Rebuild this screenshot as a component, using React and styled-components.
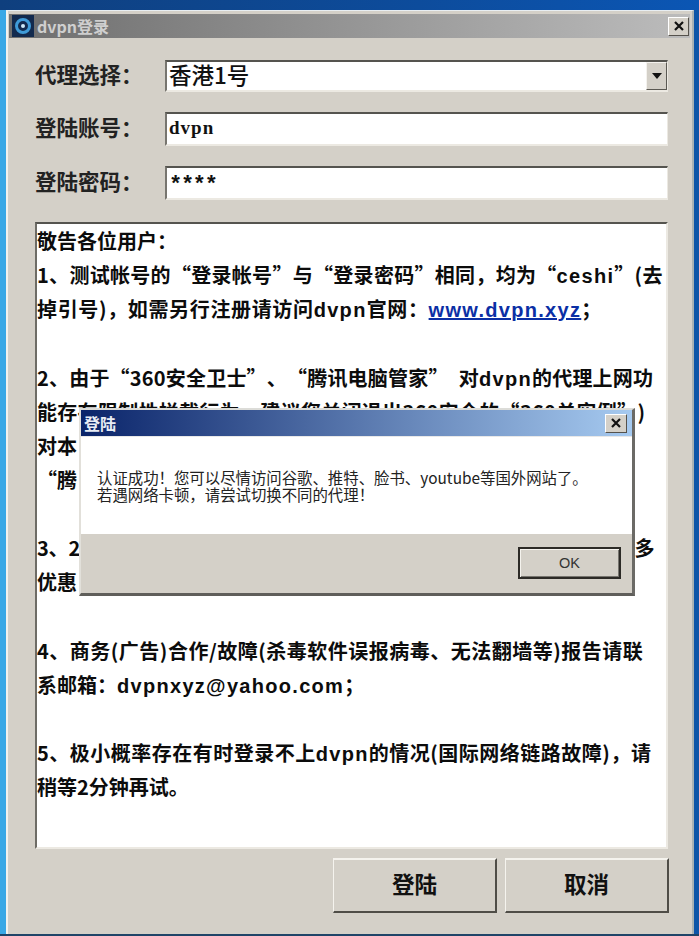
import React from "react";
import styled, { createGlobalStyle } from "styled-components";

const Global = createGlobalStyle`
  html, body { margin: 0; padding: 0; }
  body { width: 699px; height: 936px; overflow: hidden; background: #0d4f9c; text-spacing-trim: space-all; }
`;
const CJK = `"Noto Sans CJK SC", "Liberation Sans", sans-serif`;

const Desktop = styled.div`
  width: 699px; height: 936px; box-sizing: border-box; position: relative;
  padding: 10px 5px 2px 6px;
  background: linear-gradient(90deg, #39a8e6 0, #39a8e6 7px, #1060b8 7px, #0d55a8 100%);
  &::before { content: ""; position: absolute; left: 0; right: 0; top: 0; height: 10px;
    background: linear-gradient(90deg, #0f3f7e, #0d4c9c 60%, #0b56b4); }
  &::after { content: ""; position: absolute; left: 0; right: 0; bottom: 0; height: 2px; background: #1f4468; }
`;
const Win = styled.div`
  position: relative; z-index: 1;
  height: 100%; box-sizing: border-box; background: #d4d0c8;
  border-top: 1px solid #e8eef2; border-left: 2px solid #f2f2ee; border-right: 2px solid #a9b2b4;
  padding: 3px 2px 0 1px; display: flex; flex-direction: column;
`;
const TitleBar = styled.div`
  height: 24px; flex: none; display: flex; align-items: center;
  background: linear-gradient(90deg, #6e6e6e, #bcbcbc);
  padding-right: 1px;
`;
const AppIcon = styled.svg`width: 22px; height: 22px; flex: none; margin: 0 3px 0 3px;`;
const TitleText = styled.span`
  flex: 1; font: bold 16px ${CJK}; color: #cfcfcf; line-height: 24px;
`;
const CloseBtn = styled.div`
  width: 21px; height: 19px; box-sizing: border-box; background: #d4d0c8;
  border: 1px solid; border-color: #fff #55524c #55524c #fff;
  display: flex; align-items: center; justify-content: center;
`;
const Form = styled.div`
  flex: 1; display: flex; flex-direction: column; padding: 22px 22px 0 26px;
`;
const Row = styled.div`
  display: flex; align-items: center; height: ${p => p.$h}px; margin-bottom: ${p => p.$mb}px;
`;
const Label = styled.label`
  width: 130px; flex: none; font: 700 21.5px ${CJK}; color: #222; white-space: nowrap; padding-bottom: 5px;
`;
const Field = styled.div`
  flex: 1; height: 100%; box-sizing: border-box; background: #fff; position: relative;
  border-top: 2px solid #55544f; border-left: 2px solid #77756f;
  border-right: 1px solid #ece9e2; border-bottom: 2px solid #ece9e2;
  display: flex; align-items: center; padding-left: 2px;
`;
const ComboText = styled.span`font: 500 22.5px ${CJK}; color: #111; padding-bottom: 4px;`;
const ValueText = styled.span`font: bold 19px "Liberation Serif", serif; color: #111; letter-spacing: 1px; padding-bottom: 2px;`;
const Stars = styled.span`font: bold 22px "Liberation Mono", monospace; color: #111; letter-spacing: -1.3px; padding-top: 4px;`;
const Arrow = styled.div`
  position: absolute; right: 0; top: 0; bottom: 0; width: 21px; background: #d4d0c8;
  border: 1px solid; border-color: #f4f2ee #5a5852 #5a5852 #f4f2ee;
  display: flex; align-items: center; justify-content: center; box-sizing: border-box;
  &::after { content: ""; width: 0; height: 0; border: 5px solid transparent; border-top: 6px solid #111; border-bottom: 0; }
`;
const Notice = styled.div`
  height: 627px; flex: none; box-sizing: border-box; background: #fff; margin-top: 2px;
  border-top: 2px solid #55544f; border-left: 2px solid #6e6c66;
  border-right: 2px solid #ece9e2; border-bottom: 2px solid #ece9e2;
  padding: 0; overflow: hidden;
`;
const Line = styled.div`
  height: 34.15px; white-space: nowrap;
  font: 600 20px/34.15px ${CJK}; color: #0c0c0c;
  letter-spacing: ${p => p.$ls || 0}px;
`;
const Latin = styled.span`font-family: "Liberation Sans", sans-serif; font-weight: bold; letter-spacing: 1.3px;`;
const Link = styled(Latin)`color: #0b2fa5; text-decoration: underline;`;
const Actions = styled.div`
  display: flex; justify-content: flex-end; gap: 8px; padding: 9px 0 0 0; margin-right: -1px;
`;
const Btn = styled.button`
  width: 164px; height: 55px; box-sizing: border-box; background: #d4d0c8; color: #111;
  border: 1px solid; border-color: #f5f3ee #4f4d47 #4f4d47 #f5f3ee; border-width: 2px 2px 2px 1px;
  font: bold 22.5px ${CJK}; padding: 0 0 5px;
`;
const Dialog = styled.div`
  position: absolute; z-index: 3; left: 79px; top: 408px; width: 556px; height: 188px; box-sizing: border-box;
  background: #d4d0c8; border-top: 2px solid #dcdcd8; border-left: 2px solid #e2e0da;
  border-right: 3px solid #6b6a66; border-bottom: 3px solid #5f5e5a;
  display: flex; flex-direction: column;
`;
const DlgTitle = styled.div`
  height: 26px; flex: none; display: flex; align-items: center; justify-content: space-between;
  background: linear-gradient(90deg, #0a246a, #a6caf0); padding: 0 5px 0 3px;
`;
const DlgTitleText = styled.span`font: bold 16px ${CJK}; color: #e8ecf4;`;
const DlgClose = styled.div`
  width: 22px; height: 19px; box-sizing: border-box; background: #d4d0c8;
  border: 1px solid; border-color: #fff #55524c #55524c #fff;
  display: flex; align-items: center; justify-content: center;
`;
const DlgBody = styled.div`
  height: 98px; flex: none; background: #fff; padding: 32px 0 0 16px; box-sizing: border-box;
  border-top: 1px solid #e8e8e8;
`;
const DlgLine = styled.div`font: 400 15.4px/17px ${CJK}; color: #222; white-space: nowrap;`;
const DlgFoot = styled.div`
  flex: 1; display: flex; justify-content: flex-end; align-items: flex-start; padding: 13px 11px 0 0;
`;
const OkBtn = styled.button`
  width: 103px; height: 32px; box-sizing: border-box; background: #d4d0c8; color: #333;
  border: 2px solid #2c2a26; box-shadow: inset 1px 1px 0 #f5f3ee, inset -1px -1px 0 #77756f;
  font: 400 14.5px "Liberation Sans", sans-serif; padding: 0;
`;
const X = ({ s = 12 }) => (
  <svg width={s} height={s} viewBox="0 0 12 12"><path d="M2 2 L10 10 M10 2 L2 10" stroke="#111" strokeWidth="2.2" /></svg>
);

export default function App() {
  return (
    <>
      <Global />
      <Desktop>
        <Win>
          <TitleBar>
            <AppIcon viewBox="0 0 22 22">
              <rect width="22" height="22" fill="#122a4e" />
              <circle cx="11" cy="11" r="6.5" fill="none" stroke="#3f9bd8" strokeWidth="3" />
              <circle cx="11" cy="11" r="2" fill="#cfe8f6" />
            </AppIcon>
            <TitleText>dvpn登录</TitleText>
            <CloseBtn><X /></CloseBtn>
          </TitleBar>
          <Form>
            <Row $h={32} $mb={20}>
              <Label>代理选择：</Label>
              <Field><ComboText>香港1号</ComboText><Arrow /></Field>
            </Row>
            <Row $h={34} $mb={20}>
              <Label>登陆账号：</Label>
              <Field><ValueText>dvpn</ValueText></Field>
            </Row>
            <Row $h={34} $mb={20}>
              <Label>登陆密码：</Label>
              <Field><Stars>****</Stars></Field>
            </Row>
            <Notice>
              <Line>敬告各位用户：</Line>
              <Line $ls={0.3}>1、测试帐号的“登录帐号”与“登录密码”相同，均为“<Latin>ceshi</Latin>”(去</Line>
              <Line $ls={0.65}>掉引号)，如需另行注册请访问<Latin>dvpn</Latin>官网：<Link>www.dvpn.xyz</Link>；</Line>
              <Line>&nbsp;</Line>
              <Line $ls={0.2}>2、由于“360安全卫士”、“腾讯电脑管家”&ensp;对<Latin>dvpn</Latin>的代理上网功</Line>
              <Line $ls={0.3}>能存在限制性拦截行为，建议您关闭退出360安全的“360单实例”)</Line>
              <Line>对本</Line>
              <Line>“腾</Line>
              <Line>&nbsp;</Line>
              <Line $ls={-0.2}>3、2分钟注册即可免费试用，充值会员可获得更多代理线路并享受更多</Line>
              <Line>优惠</Line>
              <Line>&nbsp;</Line>
              <Line $ls={0.5}>4、商务(广告)合作/故障(杀毒软件误报病毒、无法翻墙等)报告请联</Line>
              <Line>系邮箱：<Latin>dvpnxyz@yahoo.com</Latin>；</Line>
              <Line>&nbsp;</Line>
              <Line $ls={0.5}>5、极小概率存在有时登录不上<Latin>dvpn</Latin>的情况(国际网络链路故障)，请</Line>
              <Line>稍等2分钟再试。</Line>
            </Notice>
            <Actions>
              <Btn>登陆</Btn>
              <Btn>取消</Btn>
            </Actions>
          </Form>
        </Win>
        <Dialog>
          <DlgTitle>
            <DlgTitleText>登陆</DlgTitleText>
            <DlgClose><X /></DlgClose>
          </DlgTitle>
          <DlgBody>
            <DlgLine>认证成功！您可以尽情访问谷歌、推特、脸书、youtube等国外网站了。</DlgLine>
            <DlgLine>若遇网络卡顿，请尝试切换不同的代理！</DlgLine>
          </DlgBody>
          <DlgFoot><OkBtn>OK</OkBtn></DlgFoot>
        </Dialog>
      </Desktop>
    </>
  );
}
